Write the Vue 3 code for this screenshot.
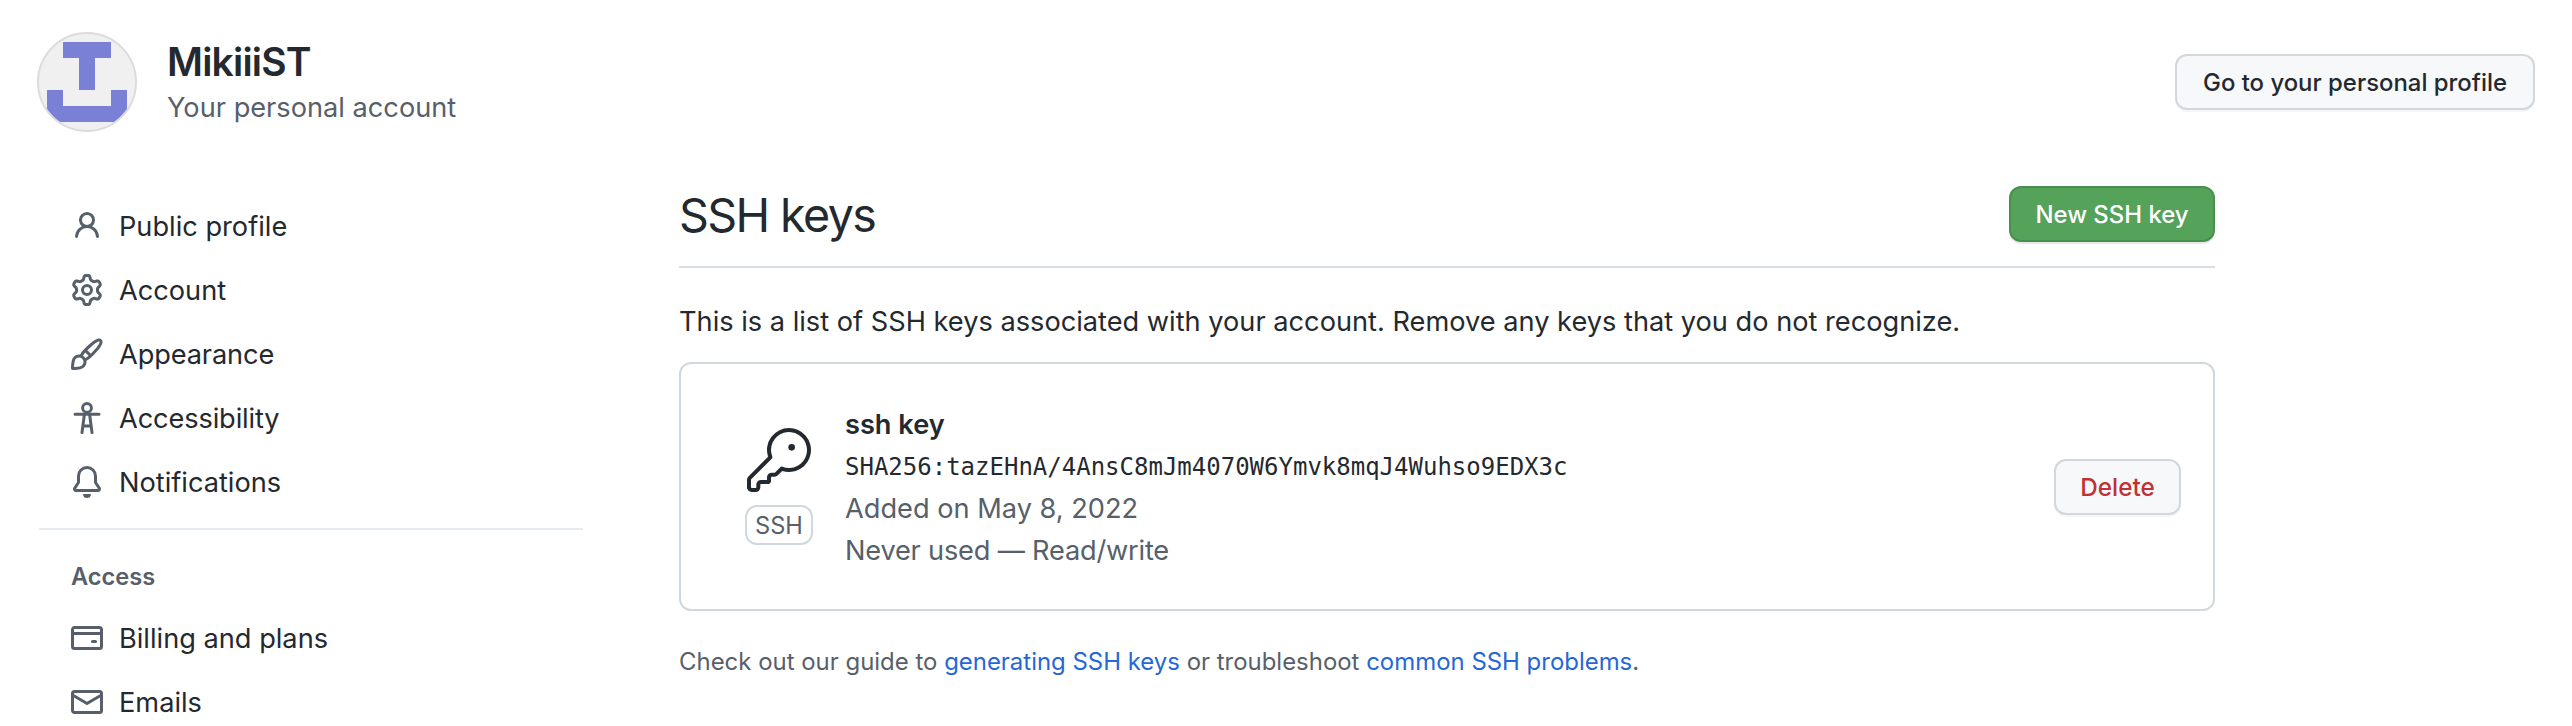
<script setup>
const gear = 'M7.429 1.525a6.593 6.593 0 011.142 0c.036.003.108.036.137.146l.289 1.105c.147.56.55.967.997 1.189.174.086.341.183.501.29.417.278.97.423 1.53.27l1.102-.303c.11-.03.175.016.195.046.219.31.41.641.573.989.014.031.022.11-.059.19l-.815.806c-.411.406-.562.957-.53 1.456a4.588 4.588 0 010 .582c-.032.499.119 1.05.53 1.456l.815.806c.08.08.073.159.059.19a6.494 6.494 0 01-.573.99c-.02.029-.086.074-.195.045l-1.103-.303c-.559-.153-1.112-.008-1.529.27-.16.107-.327.204-.5.29-.449.222-.851.628-.998 1.189l-.289 1.105c-.029.11-.101.143-.137.146a6.613 6.613 0 01-1.142 0c-.036-.003-.108-.037-.137-.146l-.289-1.105c-.147-.56-.55-.967-.997-1.189a4.502 4.502 0 01-.501-.29c-.417-.278-.97-.423-1.53-.27l-1.102.303c-.11.03-.175-.016-.195-.046a6.492 6.492 0 01-.573-.989c-.014-.031-.022-.11.059-.19l.815-.806c.411-.406.562-.957.53-1.456a4.587 4.587 0 010-.582c.032-.499-.119-1.05-.53-1.456l-.815-.806c-.08-.08-.073-.159-.059-.19a6.44 6.44 0 01.573-.99c.02-.029.086-.075.195-.045l1.103.303c.559.153 1.112.008 1.529-.27.16-.107.327-.204.5-.29.449-.222.851-.628.998-1.189l.289-1.105c.029-.11.101-.143.137-.146zM8 0c-.236 0-.47.01-.701.03-.743.065-1.29.615-1.458 1.261l-.29 1.106c-.017.066-.078.158-.211.224a5.994 5.994 0 00-.668.386c-.123.082-.233.09-.3.071L3.27 2.776c-.644-.177-1.392.02-1.82.63a7.977 7.977 0 00-.704 1.217c-.315.675-.111 1.422.363 1.891l.815.806c.05.048.098.147.088.294a6.084 6.084 0 000 .772c.01.147-.038.246-.088.294l-.815.806c-.474.469-.678 1.216-.363 1.891.2.428.436.835.704 1.218.428.609 1.176.806 1.82.63l1.103-.303c.066-.019.176-.011.299.071.213.143.436.272.668.386.133.066.194.158.212.224l.289 1.106c.169.646.715 1.196 1.458 1.26a8.094 8.094 0 001.402 0c.743-.064 1.29-.614 1.458-1.26l.29-1.106c.017-.066.078-.158.211-.224a5.98 5.98 0 00.668-.386c.123-.082.233-.09.3-.071l1.102.302c.644.177 1.392-.02 1.82-.63.268-.382.505-.789.704-1.217.315-.675.111-1.422-.364-1.891l-.814-.806c-.05-.048-.098-.147-.088-.294a6.1 6.1 0 000-.772c-.01-.147.039-.246.088-.294l.814-.806c.475-.469.679-1.216.364-1.891a7.992 7.992 0 00-.704-1.218c-.428-.609-1.176-.806-1.82-.63l-1.103.303c-.066.019-.176.011-.299-.071a5.991 5.991 0 00-.668-.386c-.133-.066-.194-.158-.212-.224L10.16 1.29C9.99.645 9.444.095 8.701.031A8.094 8.094 0 008 0zm1.5 8a1.5 1.5 0 11-3 0 1.5 1.5 0 013 0zM11 8a3 3 0 11-6 0 3 3 0 016 0z'

const profileItems = [
  { id: 'profile', label: 'Public profile', paths: ['M10.5 5a2.5 2.5 0 11-5 0 2.5 2.5 0 015 0zm.061 3.073a4 4 0 10-5.123 0 6.004 6.004 0 00-3.431 5.142.75.75 0 001.498.07 4.5 4.5 0 018.99 0 .75.75 0 101.498-.07 6.005 6.005 0 00-3.432-5.142z'] },
  { id: 'account', label: 'Account', paths: [gear] },
  { id: 'appearance', label: 'Appearance', paths: ['M11.134 1.535C9.722 2.562 8.16 4.057 6.889 5.312 5.8 6.387 5.041 7.401 4.575 8.294a3.745 3.745 0 00-3.227 1.054c-.43.431-.69 1.066-.86 1.657a11.982 11.982 0 00-.358 1.914A21.263 21.263 0 000 15.203v.054l.75-.007-.007.75h.054a14.404 14.404 0 00.654-.012 21.243 21.243 0 001.63-.118c.62-.07 1.3-.18 1.914-.357.592-.17 1.226-.43 1.657-.861a3.745 3.745 0 001.055-3.217c.908-.461 1.942-1.216 3.04-2.3 1.279-1.262 2.764-2.825 3.775-4.249.501-.706.923-1.428 1.125-2.096.2-.659.235-1.469-.368-2.07-.606-.607-1.42-.55-2.069-.34-.66.213-1.376.646-2.076 1.155zm-3.95 8.48a3.76 3.76 0 00-1.19-1.192 9.758 9.758 0 011.161-1.607l1.658 1.658a9.853 9.853 0 01-1.63 1.142zM.742 16l.007-.75-.75.008A.75.75 0 00.743 16zM12.016 2.749c-1.224.89-2.605 2.189-3.822 3.384l1.718 1.718c1.21-1.205 2.51-2.597 3.387-3.833.47-.662.78-1.227.912-1.662.134-.444.032-.551.009-.575h-.001V1.78c-.014-.014-.112-.113-.548.027-.432.14-.995.462-1.655.942zM1.62 13.089a19.56 19.56 0 00-.104 1.395 19.55 19.55 0 001.396-.104 10.528 10.528 0 001.668-.309c.526-.151.856-.325 1.011-.48a2.25 2.25 0 00-3.182-3.182c-.155.155-.329.485-.48 1.01a10.515 10.515 0 00-.309 1.67z'] },
  { id: 'accessibility', label: 'Accessibility', strokes: ['M10.2 2.95a2.2 2.2 0 11-4.4 0 2.2 2.2 0 014.4 0z', 'M2 6.1h12M6.7 6.1L5.5 15.25M9.3 6.1l1.2 9.15M5.9 12h4.2'] },
  { id: 'notifications', label: 'Notifications', paths: ['M8 16a2 2 0 001.985-1.75c.017-.137-.097-.25-.235-.25h-3.5c-.138 0-.252.113-.235.25A2 2 0 008 16z', 'M8 1.5A3.5 3.5 0 004.5 5v2.947c0 .346-.102.683-.294.97l-1.703 2.556a.018.018 0 00-.003.01l.001.006c0 .002.002.004.004.006a.017.017 0 00.006.004l.007.001h10.964l.007-.001a.016.016 0 00.006-.004.016.016 0 00.004-.006l.001-.007a.017.017 0 00-.003-.01l-1.703-2.554a1.75 1.75 0 01-.294-.97V5A3.5 3.5 0 008 1.5zM3 5a5 5 0 0110 0v2.947c0 .05.015.098.042.139l1.703 2.555A1.518 1.518 0 0113.482 13H2.518a1.518 1.518 0 01-1.263-2.36l1.703-2.554A.25.25 0 003 7.947V5z'] }
]

const accessItems = [
  { id: 'billing', label: 'Billing and plans', paths: ['M10.75 9a.75.75 0 000 1.5h1.5a.75.75 0 000-1.5h-1.5z', 'M0 3.75C0 2.784.784 2 1.75 2h12.5c.966 0 1.75.784 1.75 1.75v8.5A1.75 1.75 0 0114.25 14H1.75A1.75 1.75 0 010 12.25v-8.5zm14.5 0V5h-13V3.75a.25.25 0 01.25-.25h12.5a.25.25 0 01.25.25zm0 2.75h-13v5.75c0 .138.112.25.25.25h12.5a.25.25 0 00.25-.25V6.5z'] },
  { id: 'emails', label: 'Emails', paths: ['M1.75 2A1.75 1.75 0 000 3.75v.736a.75.75 0 000 .027v7.737C0 13.216.784 14 1.75 14h12.5A1.75 1.75 0 0016 12.25v-8.5A1.75 1.75 0 0014.25 2H1.75zM14.5 4.07v-.32a.25.25 0 00-.25-.25H1.75a.25.25 0 00-.25.25v.32L8 7.88l6.5-3.81zm-13 1.74v6.441c0 .138.112.25.25.25h12.5a.25.25 0 00.25-.25V5.809L8.38 9.397a.75.75 0 01-.76 0L1.5 5.809z'] }
]

const groups = [
  { id: 'main', items: profileItems },
  { id: 'access', title: 'Access', items: accessItems }
]
</script>

<template>
  <div class="page">
    <header class="header">
      <svg class="avatar" viewBox="0 0 100 100" aria-hidden="true">
        <clipPath id="round"><circle cx="50" cy="50" r="49.5" /></clipPath>
        <g clip-path="url(#round)">
          <rect width="100" height="100" fill="#f0f0f0" />
          <path fill="#7a80d5" d="M26 10h48v16H58v32H42V26H26zM10 58h16v16h48V58h16v32H10z" />
        </g>
        <circle cx="50" cy="50" r="49" fill="none" stroke="#dcdcdc" stroke-width="2" />
      </svg>
      <div class="identity">
        <h1 class="name">MikiiiST</h1>
        <p class="kind">Your personal account</p>
      </div>
      <button class="btn btn-go">Go to your personal profile</button>
    </header>

    <div class="columns">
      <nav class="sidebar">
        <section v-for="group in groups" :key="group.id" class="group">
          <h2 v-if="group.title" class="group-title">{{ group.title }}</h2>
          <a v-for="item in group.items" :key="item.id" class="item">
            <svg class="icon" viewBox="0 0 16 16" aria-hidden="true">
              <path v-for="d in item.paths" :key="d" fill-rule="evenodd" :d="d" />
              <path v-for="d in item.strokes" :key="d" class="stroke" :d="d" />
            </svg>
            <span :class="['item-label', item.id]">{{ item.label }}</span>
          </a>
        </section>
      </nav>

      <main class="content">
        <div class="subhead">
          <h2 class="title">SSH keys</h2>
          <button class="btn btn-new">New SSH key</button>
        </div>
        <p class="intro">This is a list of SSH keys associated with your account. Remove any keys that you do not recognize.</p>
        <div class="card">
          <div class="key-kind">
            <svg class="key-icon" viewBox="0 0 24 24" aria-hidden="true">
              <path d="M16.75 8.5a1.25 1.25 0 100-2.5 1.25 1.25 0 000 2.5z" />
              <path fill-rule="evenodd" d="M15.75 0a8.25 8.25 0 00-7.851 10.79L.513 18.178A1.75 1.75 0 000 19.414v2.836C0 23.217.784 24 1.75 24h1.5A1.75 1.75 0 005 22.25v-1a.25.25 0 01.25-.25h2.735a.75.75 0 00.545-.22l.214-.213A.875.875 0 009 19.948V18.5a.25.25 0 01.25-.25h1.086c.464 0 .91-.184 1.237-.513l1.636-1.636A8.25 8.25 0 1015.75 0zM9 8.25a6.75 6.75 0 114.288 6.287.75.75 0 00-.804.168l-1.971 1.972a.25.25 0 01-.177.073H9.25A1.75 1.75 0 007.5 18.5v1H5.25a1.75 1.75 0 00-1.75 1.75v1a.25.25 0 01-.25.25h-1.5a.25.25 0 01-.25-.25v-2.836a.25.25 0 01.073-.177l7.722-7.721a.75.75 0 00.168-.804A6.73 6.73 0 019 8.25z" />
            </svg>
            <span class="tag">SSH</span>
          </div>
          <div class="key-info">
            <strong class="key-name">ssh key</strong>
            <code class="fingerprint">SHA256:tazEHnA/4AnsC8mJm4070W6Ymvk8mqJ4Wuhso9EDX3c</code>
            <span class="meta added">Added on May 8, 2022</span>
            <span class="meta used">Never used — Read/write</span>
          </div>
          <button class="btn btn-delete">Delete</button>
        </div>
        <p class="help">Check out our guide to <a>generating SSH keys</a> or troubleshoot <a>common SSH problems</a>.</p>
      </main>
    </div>
  </div>
</template>

<style>
body {
  background: #fff;
}
</style>

<style scoped>
.page {
  box-sizing: border-box;
  width: 2572px;
  height: 726px;
  overflow: hidden;
  padding: 32px 37px 0;
  font-family: Inter, "Liberation Sans", sans-serif;
  font-size: 27.2px;
  line-height: 42px;
  color: #24292f;
  white-space: nowrap;
}
h1, h2, p {
  margin: 0;
  font-weight: 400;
}
.header {
  display: flex;
  align-items: center;
  height: 100px;
}
.avatar {
  width: 100px;
  height: 100px;
  margin-right: 30px;
}
.identity {
  flex: 1;
  padding-top: 2px;
}
.name {
  font-size: 39px;
  line-height: 50px;
  font-weight: 600;
  letter-spacing: -0.8px;
}
.kind {
  line-height: 42px;
  color: #57606a;
}
.btn {
  box-sizing: border-box;
  height: 56px;
  padding: 0;
  border: 2px solid #d3d7db;
  border-radius: 12px;
  background: #f6f8fa;
  box-shadow: 0 2px 0 rgba(27, 31, 36, 0.04);
  font-family: inherit;
  font-size: 23.9px;
  font-weight: 550;
  color: #24292f;
}
.btn-go {
  width: 360px;
}
.btn-new {
  width: 206px;
  border-color: #4a8f4f;
  background: #55a25b;
  box-shadow: 0 2px 0 rgba(27, 31, 36, 0.1);
  color: #fff;
}
.btn-delete {
  width: 127px;
  font-size: 24.3px;
  color: #bf3133;
}
.columns {
  display: flex;
  padding-left: 2px;
}
.sidebar {
  width: 544px;
  padding-top: 62px;
  margin-right: 96px;
}
.group + .group {
  margin-top: 14px;
  border-top: 2px solid #e6ebef;
  padding-top: 20px;
}
.group-title {
  padding-left: 32px;
  margin-bottom: 2px;
  font-size: 23.6px;
  line-height: 54px;
  font-weight: 600;
  color: #57606a;
}
.item {
  display: flex;
  align-items: center;
  height: 64px;
  padding-left: 32px;
}
.item-label {
  padding-top: 2px;
}
.appearance,
.accessibility {
  letter-spacing: -0.12px;
}
.icon {
  width: 32px;
  height: 32px;
  margin-right: 16px;
  fill: #57606a;
}
.stroke {
  fill: none;
  stroke: #57606a;
  stroke-width: 1.5;
  stroke-linecap: round;
  stroke-linejoin: round;
}
.content {
  width: 1536px;
}
.subhead {
  display: flex;
  justify-content: space-between;
  align-items: center;
  height: 104px;
  padding-top: 30px;
  border-bottom: 2px solid #d8dee4;
}
.title {
  padding-top: 2px;
  font-size: 46.6px;
  line-height: 72px;
  letter-spacing: -1.6px;
}
.intro {
  margin-top: 33px;
  line-height: 42px;
}
.card {
  box-sizing: border-box;
  display: flex;
  align-items: center;
  height: 249px;
  margin-top: 19px;
  padding: 0 32px 0 64px;
  border: 2px solid #d0d7de;
  border-radius: 12px;
}
.key-kind {
  display: flex;
  flex-direction: column;
  align-items: center;
  width: 68px;
  margin-right: 32px;
}
.key-icon {
  width: 64px;
  height: 64px;
  fill: #24292f;
}
.tag {
  box-sizing: border-box;
  width: 68px;
  height: 40px;
  margin-top: 13px;
  border: 2px solid #d0d7de;
  border-radius: 12px;
  text-align: center;
  font-size: 23.6px;
  line-height: 37px;
  color: #57606a;
}
.key-info {
  display: flex;
  flex: 1;
  flex-direction: column;
  padding-top: 2px;
}
.key-name {
  font-weight: 600;
}
.fingerprint {
  font-family: "DejaVu Sans Mono", monospace;
  font-size: 24px;
  line-height: 42px;
}
.meta {
  color: #57606a;
}
.used {
  letter-spacing: -0.2px;
}
.help {
  margin-top: 33px;
  font-size: 23.94px;
  line-height: 36px;
  color: #57606a;
}
.help a {
  color: #2567d6;
}
</style>
